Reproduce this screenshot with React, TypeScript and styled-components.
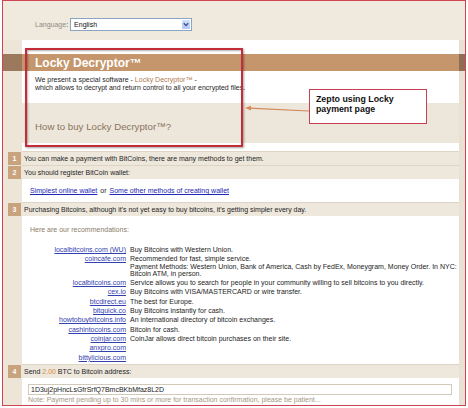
import React from 'react';
import styled, {createGlobalStyle} from 'styled-components';

const GlobalStyle = createGlobalStyle`
  * { box-sizing: border-box; }
  html, body { margin: 0; padding: 0; background: #ffffff; }
  body { font-family: "Liberation Sans", Arial, sans-serif; }
`;

const Frame = styled.div`
  position: relative;
  width: 464px;
  height: 406px;
  margin-left: 2px;
  border: 1px solid #cf4452;
  overflow: hidden;
  display: flex;
  flex-direction: column;
  padding: 0 6px 0 19px;
  font-size: 7px;
  color: #1e1e1e;
  background: linear-gradient(to right, #ece5d8 0 19px, #ffffff 19px calc(100% - 6px), #e9e1d3 calc(100% - 6px));
`;

const TopBand = styled.div`
  height: 39px;
  flex-shrink: 0;
  margin: 0 -6px 0 -19px;
  padding: 17px 0 0 32px;
  background: #efe9de;
  display: flex;
  align-items: flex-start;
  gap: 2px;
`;

const LangLabel = styled.span`
  color: #8f8b84;
  line-height: 13px;
  b { color: #333; font-weight: normal; }
`;

const Select = styled.div`
  width: 122px;
  height: 13px;
  border: 1px solid #8aa4c4;
  background: #fff;
  display: flex;
  align-items: center;
  justify-content: space-between;
  padding: 0 1px 0 3px;
  color: #111;
`;

const SelectArrow = styled.span`
  width: 8px;
  height: 9px;
  border-radius: 1px;
  background: linear-gradient(#d3e0fc, #b2c6f5);
  display: flex;
  align-items: center;
  justify-content: center;
`;

const Spacer = styled.div<{ $h: number; $bg?: string }>`
  height: ${p => p.$h}px;
  flex-shrink: 0;
  background: ${p => p.$bg || '#ffffff'};
`;

const TitleBar = styled.div`
  height: 17px;
  flex-shrink: 0;
  margin: 0 -6px 0 -19px;
  padding-left: 32px;
  display: flex;
  align-items: center;
  color: #ffffff;
  font-weight: bold;
  font-size: 12px;
  background: linear-gradient(to right, #9c795c 0 19px, #c5956c 19px calc(100% - 6px), #8f6e55 calc(100% - 6px));
`;

const Intro = styled.div`
  height: 32px;
  flex-shrink: 0;
  padding: 5px 13px 0;
  line-height: 8px;
  background: #fff;
`;

const Brand = styled.span`
  color: #b07b52;
`;

const HowTo = styled.div`
  height: 40px;
  flex-shrink: 0;
  padding: 18px 13px 0;
  background: #ede6da;
  color: #8a735f;
  font-size: 9.7px;
  line-height: 12px;
`;

const StepRow = styled.div`
  height: 14px;
  flex-shrink: 0;
  display: flex;
  border-top: 1px solid #ddd4c5;
  background: #ede7dc;
  line-height: 13px;
`;

const NumBox = styled.span`
  width: 13px;
  margin-left: -14px;
  margin-right: 3px;
  background: #c9a27e;
  color: #ffffff;
  text-align: center;
  font-weight: bold;
`;

const Amount = styled.span`
  color: #d98a3a;
`;

const WalletLinks = styled.div`
  height: 23px;
  flex-shrink: 0;
  padding-left: 8px;
  display: flex;
  align-items: center;
  gap: 3px;
  background: #fff;
`;

const Link = styled.a`
  color: #2126b4;
  text-decoration: underline;
`;

const Recommend = styled.div`
  height: 148px;
  flex-shrink: 0;
  padding-top: 10px;
  background: #fff;
`;

const RecIntro = styled.div`
  padding-left: 8px;
  line-height: 8px;
  color: #8b7b6b;
`;

const Table = styled.div`
  margin-top: 11px;
  display: grid;
  grid-template-columns: 104px 1fr;
  column-gap: 4px;
  line-height: 7.3px;
`;

const SiteCell = styled.div`
  padding: 1px 0;
  text-align: right;
  a { color: #3340b0; text-decoration: underline; }
`;

const DescCell = styled.div`
  padding: 1px 0;
  color: #1c1c1c;
`;

const Bottom = styled.div`
  flex: 1;
  padding: 6px 7px 0 6px;
  background: #fff;
`;

const AddressBox = styled.div`
  height: 11px;
  border: 1px solid #d2c9ba;
  padding: 0 2px;
  line-height: 9px;
  color: #222;
`;

const Note = styled.div`
  margin-top: 1px;
  line-height: 8px;
  color: #a59885;
`;

const Highlight = styled.div`
  position: absolute;
  left: 22px;
  top: 47px;
  width: 218px;
  height: 99px;
  border: 2px solid #c42c3a;
  box-shadow: 1px 1px 2px rgba(0, 0, 0, 0.35), inset 1px 1px 2px rgba(0, 0, 0, 0.3);
  pointer-events: none;
`;

const Callout = styled.div`
  position: absolute;
  left: 306px;
  top: 88px;
  width: 118px;
  height: 35px;
  border: 1px solid #c94050;
  background: #ffffff;
  padding: 4px 6px 0;
  font-weight: bold;
  font-size: 8.8px;
  line-height: 10px;
  color: #111;
`;

const Arrow = styled.svg`
  position: absolute;
  left: 240px;
  top: 102px;
`;

const sites = [
  {site: 'localbitcoins.com (WU)', desc: ['Buy Bitcoins with Western Union.']},
  {
    site: 'coincafe.com', desc: [
      'Recommended for fast, simple service.',
      'Payment Methods: Western Union, Bank of America, Cash by FedEx, Moneygram, Money Order. In NYC:',
      'Bitcoin ATM, in person.',
    ]
  },
  {site: 'localbitcoins.com', desc: ['Service allows you to search for people in your community willing to sell bitcoins to you directly.']},
  {site: 'cex.io', desc: ['Buy Bitcoins with VISA/MASTERCARD or wire transfer.']},
  {site: 'btcdirect.eu', desc: ['The best for Europe.']},
  {site: 'bitquick.co', desc: ['Buy Bitcoins instantly for cash.']},
  {site: 'howtobuybitcoins.info', desc: ['An international directory of bitcoin exchanges.']},
  {site: 'cashintocoins.com', desc: ['Bitcoin for cash.']},
  {site: 'coinjar.com', desc: ['CoinJar allows direct bitcoin purchases on their site.']},
  {site: 'anxpro.com', desc: []},
  {site: 'bittylicious.com', desc: []},
];

export default function App() {
  return (
    <>
      <GlobalStyle/>
      <Frame>
        <TopBand>
          <LangLabel>Language<b>:</b></LangLabel>
          <Select>
            <span>English</span>
            <SelectArrow>
              <svg width="6" height="5" viewBox="0 0 6 5">
                <path d="M0.8 1.2 L3 3.6 L5.2 1.2" fill="none" stroke="#3c4f80" strokeWidth="1.3"/>
              </svg>
            </SelectArrow>
          </Select>
        </TopBand>
        <Spacer $h={14}/>
        <TitleBar>Locky Decryptor™</TitleBar>
        <Intro>
          We present a special software - <Brand>Locky Decryptor™</Brand> -<br/>
          which allows to decrypt and return control to all your encrypted files.
        </Intro>
        <HowTo>How to buy Locky Decryptor™?</HowTo>
        <Spacer $h={8}/>
        <StepRow>
          <NumBox>1</NumBox>
          You can make a payment with BitCoins, there are many methods to get them.
        </StepRow>
        <StepRow>
          <NumBox>2</NumBox>
          You should register BitCoin wallet:
        </StepRow>
        <WalletLinks>
          <Link>Simplest online wallet</Link> or <Link>Some other methods of creating wallet</Link>
        </WalletLinks>
        <StepRow>
          <NumBox>3</NumBox>
          Purchasing Bitcoins, although it's not yet easy to buy bitcoins, it's getting simpler every day.
        </StepRow>
        <Recommend>
          <RecIntro>Here are our recommendations:</RecIntro>
          <Table>
            {sites.map((s, i) => (
              <React.Fragment key={i}>
                <SiteCell><a>{s.site}</a></SiteCell>
                <DescCell>
                  {s.desc.map((d, j) => <div key={j}>{d}</div>)}
                </DescCell>
              </React.Fragment>
            ))}
          </Table>
        </Recommend>
        <StepRow>
          <NumBox>4</NumBox>
          Send&nbsp;<Amount>2.00</Amount>&nbsp;BTC to Bitcoin address:
        </StepRow>
        <Bottom>
          <AddressBox>1D3uj2pHncLsGfrSrfQ7BmcBKbMfaz8L2D</AddressBox>
          <Note>Note: Payment pending up to 30 mins or more for transaction confirmation, please be patient...</Note>
        </Bottom>

        <Highlight/>
        <Arrow width="70" height="12" viewBox="0 0 70 12">
          <line x1="6" y1="5.2" x2="66" y2="8" stroke="#d3875a" strokeWidth="1.2"/>
          <path d="M2 5 L8 2.8 L8 7.4 Z" fill="#d3875a"/>
        </Arrow>
        <Callout>Zepto using Locky<br/>payment page</Callout>
      </Frame>
    </>
  );
}
